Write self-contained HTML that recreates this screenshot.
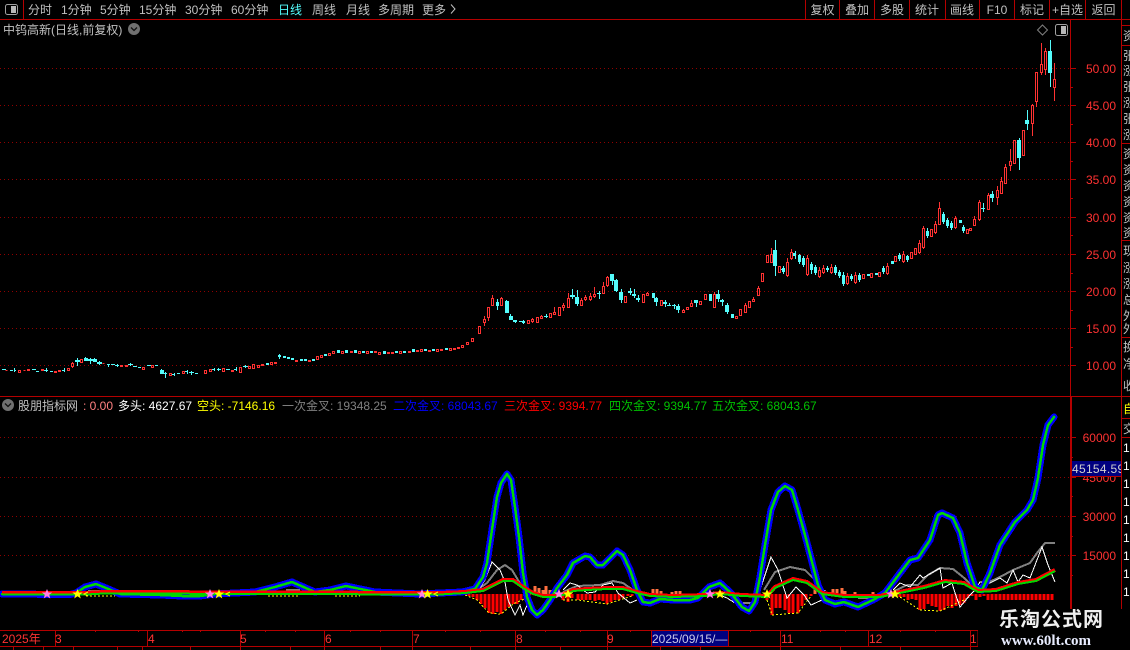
<!DOCTYPE html>
<html lang="zh"><head><meta charset="utf-8"><title>中钨高新</title>
<style>
html,body{margin:0;padding:0;background:#000;width:1130px;height:650px;overflow:hidden}
svg{display:block}
text{font-family:"Liberation Sans","WenQuanYi Zen Hei","Noto Sans CJK SC",sans-serif;font-size:12px;fill:#c0c0c0}
.p{fill:#ff3232}
.e{text-anchor:end}
.c{text-anchor:middle}
</style></head><body>
<svg width="1130" height="650" viewBox="0 0 1130 650" xmlns="http://www.w3.org/2000/svg">
<rect width="1130" height="650" fill="#000"/>

<!-- grid -->
<path shape-rendering="crispEdges" stroke="#900000" stroke-dasharray="1 3" fill="none" d="M0 68.5H1070M0 105.5H1070M0 142.5H1070M0 179.5H1070M0 217.5H1070M0 254.5H1070M0 291.5H1070M0 328.5H1070M0 365.5H1070M0 437.5H1070M0 477.5H1070M0 516.5H1070M0 555.5H1070"/>

<!-- frame lines -->
<path shape-rendering="crispEdges" stroke="#b40000" fill="none" d="M0 19.5H1130M23.5 0V19M805.5 0V19M839.5 0V19M874.5 0V19M909.5 0V19M945.5 0V19M979.5 0V19M1014.5 0V19M1049.5 0V19M1085.5 0V19M1121.5 0V19M1121.5 19V609M1121.5 25.5H1130M1121.5 45.5H1130M1121.5 143.5H1130M1121.5 240.5H1130M1121.5 337.5H1130M1121.5 418.5H1130M1121.5 437.5H1130M0 396.5H1130M1070.5 19V609M0 630.5H978M0 646.5H978M55.5 630V646M147.5 630V646M240.5 630V646M324.5 630V646M412.5 630V646M515.5 630V646M607.5 630V646M651.5 630V646M728.5 630V646M780.5 630V646M868.5 630V646M970.5 630V646M978 630V646M1070.5 68.5H1076M1070.5 105.5H1076M1070.5 142.5H1076M1070.5 179.5H1076M1070.5 217.5H1076M1070.5 254.5H1076M1070.5 291.5H1076M1070.5 328.5H1076M1070.5 365.5H1076M1070.5 87.5H1073M1070.5 124.5H1073M1070.5 161.5H1073M1070.5 198.5H1073M1070.5 235.5H1073M1070.5 273.5H1073M1070.5 310.5H1073M1070.5 347.5H1073M1070.5 437.5H1076M1070.5 477.5H1076M1070.5 516.5H1076M1070.5 555.5H1076M1070.5 457.5H1073M1070.5 496.5H1073M1070.5 536.5H1073M1070.5 575.5H1073M1071.5 397V609M95.5 630V632M138.5 630V632M13.5 646V650M43.5 646V650M73.5 646V650M117.5 646V650M142.5 646V650M190.5 646V650M240.5 646V650M290.5 646V650M324.5 646V650M380.5 646V650M412.5 646V650M470.5 646V650M515.5 646V650M560.5 646V650M607.5 646V650M660.5 646V650M700.5 646V650M780.5 646V650M840.5 646V650M900.5 646V650M970.5 646V650M182.5 630V632M200.5 630V632M265.5 630V632M295.5 630V632M350.5 630V632M380.5 630V632M445.5 630V632M480.5 630V632M545.5 630V632M580.5 630V632M630.5 630V632M750.5 630V632M820.5 630V632M845.5 630V632M900.5 630V632M935.5 630V632"/>

<!-- cyan candles -->
<path shape-rendering="crispEdges" fill="#54fcfc" stroke="none" d="M2 369h4v1h-4zM10 370h3v1h-3zM14 368h1v4h-1zM14 370h2v1h-2zM32 369h4v1h-4zM36 371h3v1h-3zM44 370h4v1h-4zM46 368h1v4h-1zM50 371h3v1h-3zM64 368h1v4h-1zM62 370h2v1h-2zM77 358h1v8h-1zM75 360h5v2h-5zM85 357h1v1h-1zM84 358h4v3h-4zM90 358h1v6h-1zM88 359h5v2h-5zM94 358h1v1h-1zM93 359h4v3h-4zM99 361h1v4h-1zM97 362h5v2h-5zM107 364h3v1h-3zM108 365h1v2h-1zM111 364h4v1h-4zM117 364h1v3h-1zM115 365h4v1h-4zM130 363h1v3h-1zM128 364h5v1h-5zM133 366h4v1h-4zM138 367h3v1h-3zM147 365h4v1h-4zM155 365h3v1h-3zM161 369h1v5h-1zM160 370h4v4h-4zM165 372h1v6h-1zM164 373h3v1h-3zM174 373h1v3h-1zM172 374h3v1h-3zM177 373h3v1h-3zM187 370h1v4h-1zM185 371h3v1h-3zM191 371h1v4h-1zM189 372h5v1h-5zM195 373h3v1h-3zM214 368h1v3h-1zM212 369h3v1h-3zM218 368h1v3h-1zM217 369h4v1h-4zM226 369h4v1h-4zM236 367h1v4h-1zM234 369h3v1h-3zM245 365h1v3h-1zM243 366h5v1h-5zM266 363h3v2h-3zM279 354h1v5h-1zM278 355h3v2h-3zM283 356h3v2h-3zM287 357h3v2h-3zM291 358h3v2h-3zM300 359h3v2h-3zM304 359h3v2h-3zM312 359h3v2h-3zM324 354h3v2h-3zM337 350h3v3h-3zM345 350h3v3h-3zM354 350h3v3h-3zM362 351h3v2h-3zM370 351h3v2h-3zM383 351h3v3h-3zM395 351h3v2h-3zM403 351h3v2h-3zM412 349h3v3h-3zM424 349h3v2h-3zM432 349h3v2h-3zM445 348h3v2h-3zM497 299h1v11h-1zM496 302h3v4h-3zM506 300h1v3h-1zM505 301h4v12h-4zM510 314h1v3h-1zM509 316h4v4h-4zM515 320h1v3h-1zM513 320h4v2h-4zM519 321h3v1h-3zM523 320h1v4h-1zM522 321h3v2h-3zM546 314h1v4h-1zM544 316h4v1h-4zM572 289h1v10h-1zM570 295h5v2h-5zM577 290h1v16h-1zM575 297h4v7h-4zM599 291h1v8h-1zM597 293h4v1h-4zM612 274h1v11h-1zM610 274h4v7h-4zM616 279h1v13h-1zM614 280h4v11h-4zM621 289h1v14h-1zM619 292h4v8h-4zM630 288h1v7h-1zM628 291h4v2h-4zM634 289h1v9h-1zM632 294h4v2h-4zM638 295h1v7h-1zM636 298h4v2h-4zM652 293h3v5h-3zM656 297h1v9h-1zM654 298h4v4h-4zM665 300h1v7h-1zM663 302h4v2h-4zM669 303h1v3h-1zM667 305h4v1h-4zM674 304h1v5h-1zM672 305h4v1h-4zM678 304h1v9h-1zM676 306h4v4h-4zM696 300h1v7h-1zM694 300h4v3h-4zM709 294h3v7h-3zM718 290h1v12h-1zM716 294h4v5h-4zM722 299h1v7h-1zM720 300h4v2h-4zM727 303h1v11h-1zM725 305h4v7h-4zM731 314h3v4h-3zM775 240h1v36h-1zM773 250h4v16h-4zM779 269h3v1h-3zM783 266h1v8h-1zM782 268h3v4h-3zM795 251h1v8h-1zM793 253h3v3h-3zM799 254h1v10h-1zM798 255h3v7h-3zM803 256h1v11h-1zM802 258h3v7h-3zM811 262h1v12h-1zM810 264h3v6h-3zM815 265h1v10h-1zM814 267h3v6h-3zM827 266h1v6h-1zM826 268h3v2h-3zM835 265h1v10h-1zM834 267h3v6h-3zM839 270h1v8h-1zM838 272h3v4h-3zM843 272h1v14h-1zM842 275h3v9h-3zM851 274h1v7h-1zM850 276h3v3h-3zM859 273h1v9h-1zM858 275h3v5h-3zM867 274h3v2h-3zM875 273h3v2h-3zM883 266h1v8h-1zM882 268h3v4h-3zM891 261h3v3h-3zM899 253h1v8h-1zM898 255h3v4h-3zM907 255h1v7h-1zM906 256h3v4h-3zM927 228h1v10h-1zM926 231h3v5h-3zM943 212h1v12h-1zM942 214h3v8h-3zM947 218h1v10h-1zM946 220h3v6h-3zM951 221h1v9h-1zM950 223h3v5h-3zM959 220h3v3h-3zM963 225h1v8h-1zM962 227h3v4h-3zM983 203h1v9h-1zM981 208h4v1h-4zM992 191h1v11h-1zM990 194h4v4h-4zM1019 138h1v32h-1zM1017 140h4v18h-4zM1027 110h1v20h-1zM1025 120h4v4h-4zM1050 40h1v47h-1zM1048 51h4v22h-4z"/>

<!-- red wicks -->
<path shape-rendering="crispEdges" stroke="#ff3232" fill="none" d="M72.5 362V368M484.5 316V326M488.5 317V321M492.5 295V298M501.5 297V306M532.5 318V323M541.5 315V319M554.5 307V315M563.5 303V311M568.5 293V298M581.5 298V301M585.5 295V301M590.5 293V301M594.5 287V298M603.5 282V294M607.5 276V287M647.5 292V296M683.5 309V313M691.5 300V304M714.5 292V294M745.5 303V313M753.5 297V300M758.5 286V288M771.5 248V262M787.5 258V277M791.5 249V260M807.5 255V276M819.5 267V278M823.5 265V274M831.5 264V274M847.5 273V285M855.5 272V284M887.5 263V275M903.5 251V263M919.5 240V254M923.5 226V249M935.5 221V234M939.5 202V208M955.5 216V229M974.5 216V226M979.5 200V202M979.5 219V221M988.5 193V195M997.5 186V205M1001.5 177V181M1005.5 164V167M1010.5 149V171M1014.5 163V164M1032.5 104V136M1036.5 101V107M1041.5 43V75M1045.5 48V75M1054.5 63V101"/>
<!-- red bodies -->
<path shape-rendering="crispEdges" stroke="#ff3232" fill="#000" d="M5.5 370.5h2M18.5 370.5h2v2h-2zM23.5 370.5h2M27.5 369.5h2v1h-2zM41.5 369.5h2v1h-2zM54.5 371.5h2v1h-2zM58.5 370.5h2v1h-2zM67.5 368.5h2v2h-2zM71.5 363.5h2v3h-2zM80.5 359.5h2v3h-2zM102.5 363.5h2M120.5 365.5h2v1h-2zM125.5 365.5h2v1h-2zM142.5 367.5h2v2h-2zM151.5 365.5h2v2h-2zM169.5 373.5h2v2h-2zM182.5 371.5h2v2h-2zM204.5 370.5h2v3h-2zM209.5 369.5h2v2h-2zM222.5 368.5h2v3h-2zM231.5 370.5h2v1h-2zM239.5 367.5h2v5h-2zM248.5 366.5h2v2h-2zM252.5 364.5h2v4h-2zM257.5 365.5h2v2h-2zM261.5 364.5h2v1h-2zM270.5 362.5h2v2h-2zM274.5 362.5h2v1h-2zM295.5 360.5h2v1h-2zM308.5 360.5h2v1h-2zM316.5 356.5h2v3h-2zM320.5 355.5h2v2h-2zM328.5 353.5h2v2h-2zM332.5 351.5h2v2h-2zM341.5 351.5h2v2h-2zM350.5 351.5h2v1h-2zM358.5 351.5h2v2h-2zM366.5 351.5h2v2h-2zM374.5 351.5h2v1h-2zM378.5 352.5h2v2h-2zM387.5 352.5h2v1h-2zM391.5 352.5h2v1h-2zM399.5 351.5h2v2h-2zM408.5 351.5h2v1h-2zM416.5 350.5h2v1h-2zM420.5 349.5h2v2h-2zM428.5 350.5h2v1h-2zM436.5 349.5h2v2h-2zM440.5 349.5h2v1h-2zM449.5 348.5h2v2h-2zM453.5 348.5h2v1h-2zM457.5 347.5h2v1h-2zM461.5 345.5h2v2h-2zM466.5 342.5h2v2h-2zM471.5 338.5h2v3h-2zM478.5 326.5h2v7h-2zM483.5 319.5h2v3h-2zM487.5 307.5h2v10h-2zM491.5 298.5h2v7h-2zM500.5 298.5h2v7h-2zM527.5 320.5h2v3h-2zM531.5 319.5h2v2h-2zM536.5 317.5h2v5h-2zM540.5 316.5h2v2h-2zM549.5 313.5h2v4h-2zM553.5 312.5h2v2h-2zM558.5 307.5h2v8h-2zM562.5 305.5h2v2h-2zM567.5 298.5h2v9h-2zM580.5 300.5h2v5h-2zM584.5 297.5h2v2h-2zM589.5 296.5h2v3h-2zM593.5 294.5h2v2h-2zM602.5 286.5h2v7h-2zM606.5 277.5h2v8h-2zM624.5 296.5h2v6h-2zM642.5 294.5h2v8h-2zM646.5 293.5h2v2h-2zM660.5 300.5h2v5h-2zM682.5 310.5h2v2h-2zM686.5 307.5h2v2h-2zM690.5 303.5h2v3h-2zM699.5 301.5h2v3h-2zM704.5 294.5h2v5h-2zM713.5 294.5h2v13h-2zM735.5 316.5h2v2h-2zM739.5 309.5h2v6h-2zM744.5 305.5h2v7h-2zM748.5 301.5h2v6h-2zM752.5 299.5h2v2h-2zM757.5 288.5h2v7h-2zM761.5 273.5h2v8h-2zM766.5 255.5h2v7h-2zM770.5 254.5h2v8h-2zM778.5 266.5h2v6h-2zM786.5 262.5h2v13h-2zM790.5 252.5h2v6h-2zM806.5 258.5h2v16h-2zM818.5 270.5h2v6h-2zM822.5 268.5h2v4h-2zM830.5 267.5h2v5h-2zM846.5 276.5h2v7h-2zM854.5 275.5h2v7h-2zM862.5 274.5h2v4h-2zM870.5 273.5h2v4h-2zM878.5 272.5h2v4h-2zM886.5 266.5h2v7h-2zM894.5 256.5h2v5h-2zM902.5 254.5h2v7h-2zM910.5 252.5h2v6h-2zM914.5 248.5h2v6h-2zM918.5 243.5h2v9h-2zM922.5 228.5h2v19h-2zM930.5 229.5h2v7h-2zM934.5 224.5h2v8h-2zM938.5 208.5h2v16h-2zM954.5 218.5h2v9h-2zM966.5 229.5h2v4h-2zM969.5 228.5h2v2h-2zM973.5 219.5h2v6h-2zM978.5 202.5h2v17h-2zM987.5 195.5h2v14h-2zM996.5 190.5h2v7h-2zM1000.5 181.5h2v12h-2zM1004.5 167.5h2v16h-2zM1009.5 161.5h2v4h-2zM1013.5 140.5h2v23h-2zM1022.5 130.5h2v25h-2zM1031.5 105.5h2v18h-2zM1035.5 72.5h2v29h-2zM1040.5 64.5h2v8h-2zM1044.5 51.5h2v18h-2zM1053.5 79.5h2v8h-2z"/>

<!-- histogram red -->
<path shape-rendering="crispEdges" stroke="#ff0000" stroke-width="3" fill="none" d="M465 594V595M469 594V596M473 594V597M477 594V600M481 594V604M485 594V608M489 594V613M493 594V614M497 594V612M501 594V614M505 594V610M509 594V607M513 594V604M517 594V604M521 594V600M525 594V599M529 594V597M555 594V597M563 594V600M568 594V602M572 594V598M578 594V600M582 594V600M586 594V600M590 594V600M595 594V601M599 594V600M603 594V601M607 594V604M611 594V602M615 594V600M619 594V600M623 594V598M628 594V596M632 594V596M767 594V600M772 594V615M776 594V608M780 594V608M785 594V610M789 594V613M793 594V613M798 594V613M802 594V606M806 594V600M811 594V596M900 594V597M904 594V597M908 594V600M912 594V599M916 594V600M920 594V610M924 594V609M928 594V604M932 594V606M936 594V607M940 594V611M944 594V610M948 594V606M952 594V608M956 594V606M960 594V605M964 594V603M968 594V598M972 594V596M976 594V600M980 594V597M984 594V596M988 594V600M992 594V600M996 594V600M1000 594V600M1004 594V600M1008 594V600M1012 594V600M1016 594V600M1020 594V600M1024 594V600M1028 594V600M1032 594V600M1036 594V600M1040 594V600M1044 594V600M1048 594V600M1052 594V600"/>
<!-- histogram envelope -->
<path shape-rendering="crispEdges" stroke="#ffff00" stroke-dasharray="2 2" fill="none" d="M465 595L477 600 489 613 501 614 513 604 529 597M563 600L578 600 607 604 632 596M767 600L772 615 798 613 811 596M900 597L920 610 940 611 968 598M86 596H115M268 596H298M335 596H360"/>
<!-- histogram orange -->
<path shape-rendering="crispEdges" stroke="#ff7040" stroke-width="3" fill="none" d="M531 594V590M535 594V586M539 594V588M543 594V590M546 594V586M550 594V590M653 594V589M657 594V589M661 594V591M672 594V592M676 594V591M680 594V591M815 594V588M833 594V589M837 594V589M842 594V588M845 594V591M855 594V592M873 594V592"/>

<!-- gray line -->
<path fill="none" stroke="#808080" stroke-width="2" shape-rendering="crispEdges" d="M477 590L487 583 497 570 505 565 512 570 518 580 523 588 532 594M563 592L577 586 600 585 613 581 623 583 633 590M764 590L775 572 790 567 805 570 815 580 825 597M858 598H876M893 592L907 585 918 585 928 575 940 568 953 569 963 577 975 588 987 583 1000 577 1013 570 1030 563 1037 553 1045 543 1055 543M88 591H104M286 590H300"/>
<!-- white line -->
<path fill="none" stroke="#ffffff" stroke-width="1" shape-rendering="crispEdges" d="M480 588L485 580 492 562 500 570 505 582 508 600 515 615 520 605 523 615 527 605M563 590L570 583 577 585 587 593 595 592 603 585 612 583 618 593 630 603 637 600M713 592L727 598 735 603 753 603 760 590 771 557 778 570 787 598 796 587 804 595 811 605 822 600 825 590M893 590L900 583 910 587 920 575 923 578 940 568 943 588 952 583 955 593 960 607 970 595 975 590 980 582 990 583 1000 578 1007 583 1013 570 1018 582 1023 575 1030 578 1042 547 1048 565 1055 582"/>

<!-- blue/green curve -->
<path shape-rendering="crispEdges" fill="none" stroke="#0000ff" stroke-width="7" stroke-linejoin="round" stroke-linecap="round" d="M2 594L70 594.5 76 593 85 587 96 584 106 588 120 594 160 595 182 596 200 596 215 594 255 592 275 587 292 582 315 592 330 590 346 586 375 592 420 594 440 593 462 592 475 589 483 577 487 563 490 543 493 523 497 497 501 483 507 474 511 480 515 507 519 537 523 573 527 597 532 610 537 615 543 610 550 600 557 588 567 575 573 563 585 556 590 557 597 565 603 565 617 551 623 555 630 570 637 590 643 602 650 603 660 599 673 600 690 600 698 598 709 587 720 583 731 593 742 607 749 611 755 602 760 577 765 545 771 510 778 492 785 486 792 490 798 510 805 535 812 562 818 585 825 600 835 604 844 602 858 607 873 600 885 593 897 577 910 560 918 558 930 540 938 515 942 513 953 518 960 533 967 563 975 587 982 590 990 573 1000 545 1015 522 1027 510 1033 500 1038 478 1043 445 1048 425 1054 417"/>
<path shape-rendering="crispEdges" fill="none" stroke="#00d800" stroke-width="2.5" stroke-linejoin="round" stroke-linecap="round" d="M2 594L70 594.5 76 593 85 587 96 584 106 588 120 594 160 595 182 596 200 596 215 594 255 592 275 587 292 582 315 592 330 590 346 586 375 592 420 594 440 593 462 592 475 589 483 577 487 563 490 543 493 523 497 497 501 483 507 474 511 480 515 507 519 537 523 573 527 597 532 610 537 615 543 610 550 600 557 588 567 575 573 563 585 556 590 557 597 565 603 565 617 551 623 555 630 570 637 590 643 602 650 603 660 599 673 600 690 600 698 598 709 587 720 583 731 593 742 607 749 611 755 602 760 577 765 545 771 510 778 492 785 486 792 490 798 510 805 535 812 562 818 585 825 600 835 604 844 602 858 607 873 600 885 593 897 577 910 560 918 558 930 540 938 515 942 513 953 518 960 533 967 563 975 587 982 590 990 573 1000 545 1015 522 1027 510 1033 500 1038 478 1043 445 1048 425 1054 417"/>

<!-- red/green moving line -->
<path shape-rendering="crispEdges" fill="none" stroke="#ff0000" stroke-width="4" stroke-linejoin="round" d="M2 593L86 593 104 592 440 593 465 592 483 590 493 585 503 580 513 580 523 587 533 593 543 596 555 596 567 593 573 590 587 589 607 588 623 588 637 592 650 595 673 596 705 595 720 593 742 595 767 596 775 587 793 579 807 582 822 593 844 596 880 596 895 593 924 587 945 581 964 583 978 591 996 590 1018 583 1036 580 1055 570"/>
<path shape-rendering="crispEdges" fill="none" stroke="#00d800" stroke-width="2" stroke-linejoin="round" d="M2 594.5L86 594.5 104 593.5 440 594.5 465 593 483 591 493 586 503 581 513 581 523 588 533 594 543 597 555 597 567 594 573 591 587 590 607 589 623 589 637 593 650 596 673 597 705 596 720 594 742 596 767 597 775 588 793 580 807 583 822 594 844 597 880 597 895 594 924 588 945 582 964 584 978 592 996 591 1018 584 1036 581 1055 571"/>

<!-- stars -->
<path fill="#ff80e0" d="M47 589l1.5 3.5h3.7l-3 2.3 1.1 3.7-3.3-2.3-3.3 2.3 1.1-3.7-3-2.3h3.700zM210 589l1.5 3.5h3.7l-3 2.3 1.1 3.7-3.3-2.3-3.3 2.3 1.1-3.7-3-2.3h3.7zM422 589l1.5 3.5h3.7l-3 2.3 1.1 3.7-3.3-2.3-3.3 2.3 1.1-3.7-3-2.3h3.7zM559 589l1.5 3.5h3.7l-3 2.3 1.1 3.7-3.3-2.3-3.3 2.3 1.1-3.7-3-2.3h3.7zM710 589l1.5 3.5h3.7l-3 2.3 1.1 3.7-3.3-2.3-3.3 2.3 1.1-3.7-3-2.3h3.7zM891 589l1.5 3.5h3.7l-3 2.3 1.1 3.7-3.3-2.3-3.3 2.3 1.1-3.7-3-2.3h3.7z"/>
<path fill="#ffff00" d="M77.5 589l1.5 3.5h3.7l-3 2.3 1.1 3.7-3.3-2.3-3.3 2.3 1.1-3.7-3-2.3h3.7zM219 589l1.5 3.5h3.7l-3 2.3 1.1 3.7-3.3-2.3-3.3 2.3 1.1-3.7-3-2.3h3.7zM427.5 589l1.5 3.5h3.7l-3 2.3 1.1 3.7-3.3-2.3-3.3 2.3 1.1-3.7-3-2.3h3.7zM568 589l1.5 3.5h3.7l-3 2.3 1.1 3.7-3.3-2.3-3.3 2.3 1.1-3.7-3-2.3h3.7zM720 589l1.5 3.5h3.7l-3 2.3 1.1 3.7-3.3-2.3-3.3 2.3 1.1-3.7-3-2.3h3.7zM767 589l1.5 3.5h3.7l-3 2.3 1.1 3.7-3.3-2.3-3.3 2.3 1.1-3.7-3-2.3h3.7zM895 589l1.5 3.5h3.7l-3 2.3 1.1 3.7-3.3-2.3-3.3 2.3 1.1-3.7-3-2.3h3.7z"/>
<path fill="none" stroke="#ffff00" d="M88 592l-4 2 4 2M230 592l-4 2 4 2M438 592l-4 2 4 2"/>

<!-- toolbar icons -->
<rect x="5.5" y="4.5" width="12" height="10" rx="2" fill="none" stroke="#a0a0a0"/>
<rect x="11" y="6" width="5" height="7" fill="#b8b8b8"/>
<rect x="1055.5" y="24.5" width="12" height="11" rx="2" fill="none" stroke="#a0a0a0"/>
<rect x="1061" y="26" width="5" height="8" fill="#b8b8b8"/>
<path d="M1042.5 25l5 5-5 5-5-5z" fill="none" stroke="#808080"/>
<circle cx="134" cy="29" r="6" fill="#707070"/>
<path d="M131 27.5l3 3 3-3" fill="none" stroke="#111" stroke-width="1.3"/>
<circle cx="8" cy="405" r="6" fill="#707070"/>
<path d="M5 403.5l3 3 3-3" fill="none" stroke="#111" stroke-width="1.3"/>

<!-- toolbar text -->
<text x="28" y="14">分时</text>
<text x="61" y="14">1分钟</text>
<text x="100" y="14">5分钟</text>
<text x="139" y="14">15分钟</text>
<text x="185" y="14">30分钟</text>
<text x="231" y="14">60分钟</text>
<text x="278" y="14" style="fill:#54fcfc">日线</text>
<text x="312" y="14">周线</text>
<text x="346" y="14">月线</text>
<text x="378" y="14">多周期</text>
<text x="422" y="14">更多</text>
<path d="M451 4.5l4 4.5-4 4.5" fill="none" stroke="#c0c0c0"/>
<text x="822.5" y="14" class="c">复权</text>
<text x="857" y="14" class="c">叠加</text>
<text x="892" y="14" class="c">多股</text>
<text x="927" y="14" class="c">统计</text>
<text x="962" y="14" class="c">画线</text>
<text x="997" y="14" class="c">F10</text>
<text x="1032" y="14" class="c">标记</text>
<text x="1067.5" y="14" class="c">+自选</text>
<text x="1103.5" y="14" class="c">返回</text>

<text x="3" y="34">中钨高新(日线,前复权)</text>

<!-- price labels -->
<text x="1116" y="73" class="p e">50.00</text>
<text x="1116" y="110" class="p e">45.00</text>
<text x="1116" y="147" class="p e">40.00</text>
<text x="1116" y="184" class="p e">35.00</text>
<text x="1116" y="222" class="p e">30.00</text>
<text x="1116" y="259" class="p e">25.00</text>
<text x="1116" y="296" class="p e">20.00</text>
<text x="1116" y="333" class="p e">15.00</text>
<text x="1116" y="370" class="p e">10.00</text>
<text x="1116" y="442" class="p e">60000</text>
<text x="1116" y="482" class="p e">45000</text>
<text x="1116" y="521" class="p e">30000</text>
<text x="1116" y="560" class="p e">15000</text>
<rect x="1072" y="461" width="49" height="15" fill="#000080"/>
<path d="M1072 476.5H1121" stroke="#b40000"/>
<svg x="1072" y="461" width="49" height="15"><text x="0" y="12" style="fill:#d0d0d0;letter-spacing:.3px">45154.59</text></svg>

<!-- indicator legend -->
<text x="18" y="410">股朋指标网</text>
<text x="83" y="410" style="fill:#ff8080">: 0.00</text>
<text x="118" y="410" style="fill:#fff">多头: 4627.67</text>
<text x="197" y="410" style="fill:#ff0">空头: -7146.16</text>
<text x="282" y="410" style="fill:#808080">一次金叉: 19348.25</text>
<text x="393" y="410" style="fill:#0000ff">二次金叉: 68043.67</text>
<text x="504" y="410" style="fill:#ff0000">三次金叉: 9394.77</text>
<text x="609" y="410" style="fill:#00c000">四次金叉: 9394.77</text>
<text x="712" y="410" style="fill:#00c000">五次金叉: 68043.67</text>

<!-- date axis -->
<rect x="652" y="631" width="76" height="15" fill="#000080"/>
<text x="2" y="643" class="p">2025年</text>
<text x="55" y="643" class="p">3</text>
<text x="148" y="643" class="p">4</text>
<text x="240" y="643" class="p">5</text>
<text x="325" y="643" class="p">6</text>
<text x="413" y="643" class="p">7</text>
<text x="516" y="643" class="p">8</text>
<text x="607" y="643" class="p">9</text>
<text x="652" y="643" style="fill:#c8c8e8">2025/09/15/—</text>
<text x="781" y="643" class="p">11</text>
<text x="869" y="643" class="p">12</text>
<text x="970" y="643" class="p">1</text>

<!-- right clipped column -->
<text x="1123" y="40">资</text>
<text x="1123" y="60">张</text><text x="1123" y="75">涨</text><text x="1123" y="91">张</text><text x="1123" y="107">涨</text><text x="1123" y="123">张</text><text x="1123" y="139">涨</text>
<text x="1123" y="158">资</text><text x="1123" y="174">资</text><text x="1123" y="190">资</text><text x="1123" y="206">资</text><text x="1123" y="222">资</text><text x="1123" y="237">资</text>
<text x="1123" y="255">现</text><text x="1123" y="272">涨</text><text x="1123" y="288">涨</text><text x="1123" y="304">总</text><text x="1123" y="320">外</text><text x="1123" y="333">外</text>
<text x="1123" y="351">换</text><text x="1123" y="368">净</text><text x="1123" y="390">收</text>
<text x="1123" y="413" style="fill:#ff0">自</text>
<text x="1123" y="433">交</text>
<text x="1123" y="452" style="fill:#fff">1</text><text x="1123" y="470" style="fill:#fff">1</text><text x="1123" y="488" style="fill:#fff">1</text><text x="1123" y="506" style="fill:#fff">1</text><text x="1123" y="524" style="fill:#fff">1</text><text x="1123" y="542" style="fill:#fff">1</text><text x="1123" y="560" style="fill:#fff">1</text><text x="1123" y="578" style="fill:#fff">1</text><text x="1123" y="596" style="fill:#fff">1</text>

<!-- watermark -->
<rect x="978" y="609" width="152" height="41" fill="#000"/>
<text x="999" y="626" style="font-size:20px;font-weight:bold;fill:#f0f0f0;letter-spacing:1px;font-family:'Liberation Sans','Noto Sans CJK SC',sans-serif">乐淘公式网</text>
<text x="1001" y="645" style="font-family:'Liberation Serif',serif;font-size:15px;font-weight:bold;fill:#e8ecff">www.60lt.com</text>

</svg>
</body></html>
